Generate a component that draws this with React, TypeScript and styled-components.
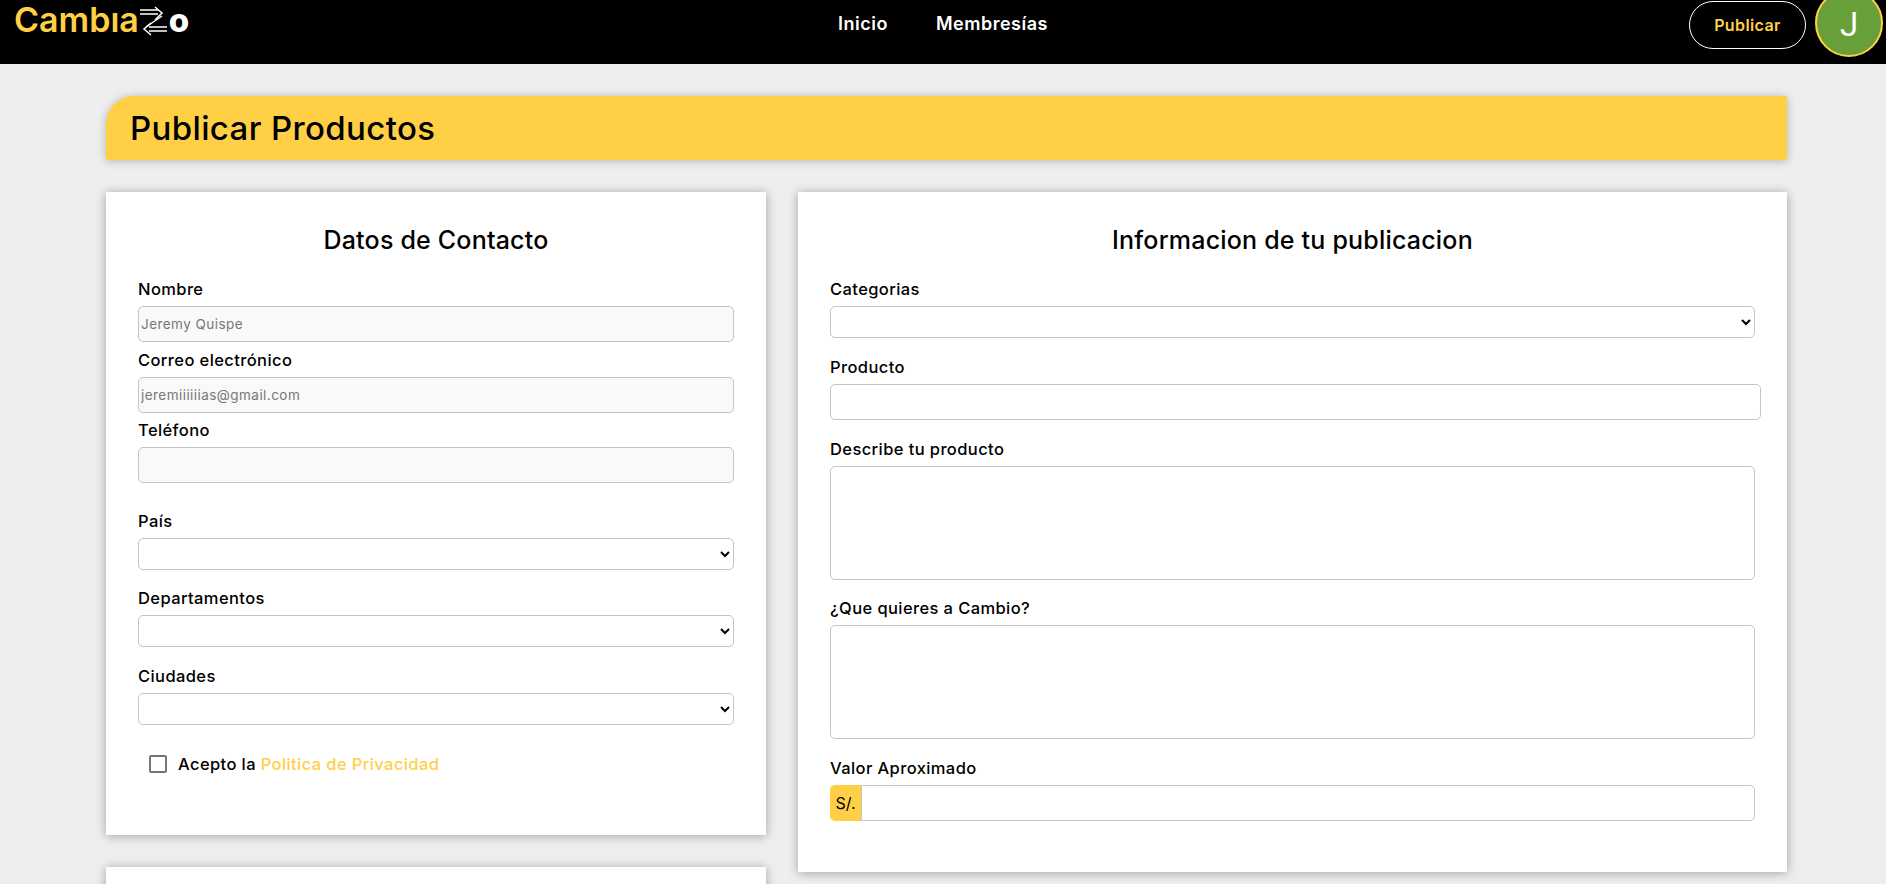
import React from "react";
import styled, { createGlobalStyle } from "styled-components";

const FONT = `"Inter", "Noto Sans", "Liberation Sans", sans-serif`;

const Global = createGlobalStyle`
  html, body { margin: 0; padding: 0; height: 884px; overflow: hidden; background: #eeeeee; }
  body { font-family: ${FONT}; color: #000; }
  * { box-sizing: border-box; }
`;

const Nav = styled.header`
  height: 64px;
  background: #000;
  display: grid;
  grid-template-columns: 1fr auto 1fr;
`;
const LogoBox = styled.div`
  display: flex;
  align-items: flex-start;
  padding: 0 0 0 14px;
`;
const LogoWord = styled.span`
  font-size: 34px;
  line-height: 40px;
  font-weight: 600;
  color: #ffd046;
`;
const LogoO = styled.span`
  font-size: 33px;
  line-height: 40px;
  font-weight: 800;
  color: #fff;
`;
const LogoArrows = styled.svg`
  width: 30px;
  height: 34px;
  margin-top: 3px;
  flex: none;
`;
const NavLinks = styled.nav`
  display: flex;
  gap: 48px;
  padding-top: 13px;
`;
const NavLink = styled.a`
  font-size: 18px;
  line-height: 22px;
  font-weight: 600;
  letter-spacing: 0.5px;
  color: #fff;
`;
const NavRight = styled.div`
  display: flex;
  justify-content: flex-end;
  align-items: flex-start;
  gap: 9px;
`;
const PublishBtn = styled.button`
  width: 117px;
  height: 48px;
  margin-top: 1px;
  border-radius: 24px;
  border: 1px solid #fff;
  background: #000;
  color: #ffd046;
  letter-spacing: 0.4px;
  font: 600 16px ${FONT};
`;
const Avatar = styled.div`
  width: 68px;
  height: 68px;
  margin: -11px 3px 0 0;
  border: 2px solid #ffd046;
  border-radius: 50%;
  background: #689f38;
  color: #fff;
  font: 400 33px Roboto, sans-serif;
  display: flex;
  align-items: center;
  justify-content: center;
  padding-top: 2px;
`;

const Main = styled.main`
  padding: 32px 99px 0 106px;
`;
const Banner = styled.div`
  height: 64px;
  background: #ffd046;
  border-radius: 28px 0 0 0;
  box-shadow: 0 1px 10px rgba(0, 0, 0, 0.25);
  display: flex;
  align-items: center;
  padding-left: 24px;
  font-size: 33px;
  font-weight: 450;
  letter-spacing: 0.36px;
`;
const Columns = styled.div`
  display: grid;
  grid-template-columns: 660px 989px;
  gap: 32px;
  margin-top: 32px;
  align-items: start;
`;
const LeftCol = styled.div`
  display: flex;
  flex-direction: column;
  gap: 32px;
`;
const Card = styled.section<{ $h: number }>`
  background: #fff;
  height: ${(p) => p.$h}px;
  padding: 32px;
  box-shadow: 0 1px 10px rgba(0, 0, 0, 0.32);
`;
const CardTitle = styled.h2`
  margin: 1px 0 24px;
  font-size: 25px;
  line-height: 30px;
  font-weight: 450;
  letter-spacing: 0.2px;
  text-align: center;
`;
const Label = styled.label<{ $mt?: number }>`
  display: block;
  font-size: 16.5px;
  line-height: 21px;
  font-weight: 450;
  letter-spacing: 0.4px;
  margin-top: ${(p) => p.$mt ?? 0}px;
  margin-bottom: 6px;
`;
const Field = styled.input<{ $grey?: boolean; $over?: number }>`
  display: block;
  width: calc(100% + ${(p) => p.$over ?? 0}px);
  height: 36px;
  border: 1px solid #c4c4c4;
  border-radius: 5px;
  background: ${(p) => (p.$grey ? "#f9f9f9" : "#fff")};
  padding: 0 2px;
  font: 400 13.5px ${FONT};
  letter-spacing: 0.45px;
  color: #777;
  outline: none;
`;
const Select = styled.select`
  display: block;
  width: 100%;
  height: 32px;
  border: 1px solid #c4c4c4;
  border-radius: 5px;
  background: #fff;
  font: 400 14px ${FONT};
`;
const Area = styled.textarea`
  display: block;
  width: 100%;
  height: 114px;
  border: 1px solid #c4c4c4;
  border-radius: 5px;
  background: #fff;
  resize: none;
  outline: none;
`;
const Check = styled.div`
  display: flex;
  align-items: center;
  gap: 11px;
  margin: 28px 0 0 11px;
  font-size: 16.5px;
  font-weight: 450;
  letter-spacing: 0.4px;
  line-height: 22px;
`;
const Box = styled.span`
  width: 18px;
  height: 18px;
  border: 2px solid #767676;
  border-radius: 2px;
  background: #fff;
`;
const Link = styled.a`
  color: #ffd046;
`;
const InputGroup = styled.div`
  display: flex;
  height: 36px;
`;
const Prefix = styled.span`
  width: 31px;
  background: #ffd046;
  border-radius: 5px 0 0 5px;
  display: flex;
  align-items: center;
  justify-content: center;
  font-size: 16px;
`;
const GroupInput = styled.input`
  flex: 1;
  min-width: 0;
  border: 1px solid #c4c4c4;
  border-radius: 0 5px 5px 0;
  outline: none;
`;

export default function App() {
  return (
    <>
      <Global />
      <Nav>
        <LogoBox>
          <LogoWord>Cambıa</LogoWord>
          <LogoArrows viewBox="0 0 30 34" fill="none" stroke="#fff" strokeWidth="1.5">
            <path d="M1 7H19M1 11H19M16 4L23 10L16 17" />
            <path d="M23 13L7 24" />
            <path d="M12 20L5 26L12 32M10 24H28M10 28H28" />
          </LogoArrows>
          <LogoO>o</LogoO>
        </LogoBox>
        <NavLinks>
          <NavLink>Inicio</NavLink>
          <NavLink>Membresías</NavLink>
        </NavLinks>
        <NavRight>
          <PublishBtn>Publicar</PublishBtn>
          <Avatar>J</Avatar>
        </NavRight>
      </Nav>
      <Main>
        <Banner>Publicar Productos</Banner>
        <Columns>
          <LeftCol>
            <Card $h={643}>
              <CardTitle>Datos de Contacto</CardTitle>
              <Label>Nombre</Label>
              <Field $grey defaultValue="Jeremy Quispe" />
              <Label $mt={8}>Correo electrónico</Label>
              <Field $grey defaultValue="jeremiiiiiias@gmail.com" />
              <Label $mt={7}>Teléfono</Label>
              <Field $grey />
              <Label $mt={28}>País</Label>
              <Select />
              <Label $mt={18}>Departamentos</Label>
              <Select />
              <Label $mt={19}>Ciudades</Label>
              <Select />
              <Check>
                <Box />
                <span>
                  Acepto la <Link>Politica de Privacidad</Link>
                </span>
              </Check>
            </Card>
            <Card $h={100} />
          </LeftCol>
          <Card $h={680}>
            <CardTitle>Informacion de tu publicacion</CardTitle>
            <Label>Categorias</Label>
            <Select />
            <Label $mt={19}>Producto</Label>
            <Field $over={6} />
            <Label $mt={19}>Describe tu producto</Label>
            <Area />
            <Label $mt={18}>¿Que quieres a Cambio?</Label>
            <Area />
            <Label $mt={19}>Valor Aproximado</Label>
            <InputGroup>
              <Prefix>S/.</Prefix>
              <GroupInput />
            </InputGroup>
          </Card>
        </Columns>
      </Main>
    </>
  );
}
